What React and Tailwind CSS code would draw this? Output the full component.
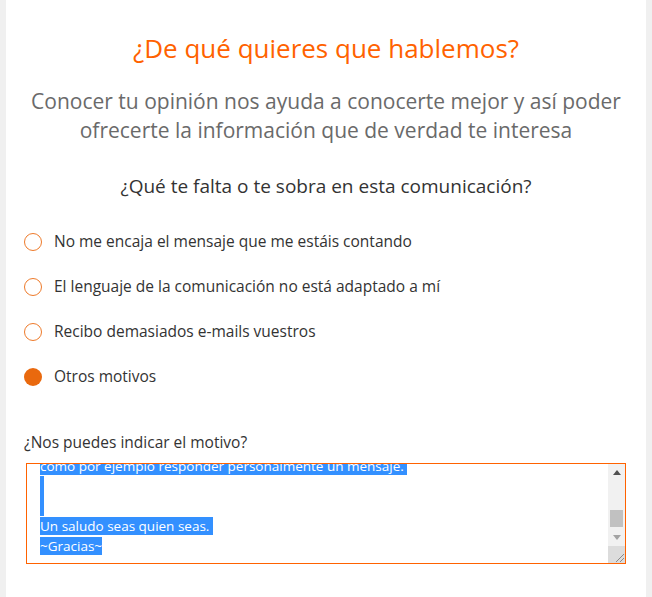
import React from "react";

const font = { fontFamily: "'Open Sans', Lato, sans-serif" };

const options = [
	{ label: "No me encaja el mensaje que me estáis contando", checked: false },
	{ label: "El lenguaje de la comunicación no está adaptado a mí", checked: false },
	{ label: "Recibo demasiados e-mails vuestros", checked: false },
	{ label: "Otros motivos", checked: true },
];

const Radio = ({ checked }) => (
	<span
		className={`w-[18px] h-[18px] rounded-full shrink-0 ${
			checked ? "bg-[#e9690e]" : "border-[1.5px] border-[#ee7a2a] bg-white"
		}`}
	/>
);

const Sel = ({ children }) => (
	<span className="bg-[#3390ff] text-white">{children}</span>
);

const FakeTextarea = () => (
	<div className="mx-[20px] h-[101px] border border-[#ff6200] bg-white flex overflow-hidden">
		{/* text area content, scrolled to bottom */}
		<div className="flex-1 overflow-hidden pl-[13px] text-[13.5px] leading-[20px] text-white">
			<div className="-mt-[8px]">
				<div className="h-[20px] whitespace-pre">
					<Sel>como por ejemplo responder personalmente un mensaje. </Sel>
				</div>
				<div className="h-[20px]">
					<span className="inline-block w-[4px] h-[20px] bg-[#3390ff] align-top" />
				</div>
				<div className="h-[20px]">
					<span className="inline-block w-[4px] h-[20px] bg-[#3390ff] align-top" />
				</div>
				<div className="h-[20px] whitespace-pre">
					<Sel>Un saludo seas quien seas. </Sel>
				</div>
				<div className="h-[20px] whitespace-pre">
					<Sel>~Gracias~</Sel>
				</div>
			</div>
		</div>
		{/* scrollbar */}
		<div className="w-[17px] flex flex-col bg-[#f1f1f1]">
			<div className="h-[17px] flex items-center justify-center">
				<svg width="8" height="5" viewBox="0 0 8 5">
					<path d="M4 0 L8 5 L0 5 Z" fill="#505050" />
				</svg>
			</div>
			<div className="flex-1 flex flex-col justify-end pb-[2px]">
				<div className="mx-[2px] h-[17px] bg-[#c1c1c1]" />
			</div>
			<div className="h-[17px] flex items-center justify-center">
				<svg width="8" height="5" viewBox="0 0 8 5">
					<path d="M0 0 L8 0 L4 5 Z" fill="#a3a3a3" />
				</svg>
			</div>
			<div className="h-[17px] bg-[#dcdcdc] flex items-end justify-end">
				<svg width="12" height="12" viewBox="0 0 12 12">
					<path d="M11 3 L3 11 M11 7 L7 11" stroke="#8a8a8a" strokeWidth="1" />
				</svg>
			</div>
		</div>
	</div>
);

export default function App() {
	return (
		<div className="min-h-screen bg-[#f0f0f0] px-[6px]" style={font}>
			<div className="bg-white min-h-screen pt-[30px] pb-[34px]">
				<h1 className="text-center text-[26px] leading-[36px] text-[#ff6200]">
					¿De qué quieres que hablemos?
				</h1>
				<p className="mt-[21px] text-center text-[21px] leading-[29px] text-[#6a6a6a]">
					Conocer tu opinión nos ayuda a conocerte mejor y así poder
					<br />
					ofrecerte la información que de verdad te interesa
				</p>
				<h2 className="mt-[28px] text-center text-[19px] leading-[26px] text-[#333333]">
					¿Qué te falta o te sobra en esta comunicación?
				</h2>
				<ul className="mt-[32px] flex flex-col gap-[23px] pl-[18px]">
					{options.map((o) => (
						<li key={o.label} className="flex items-center gap-[12px] h-[22px]">
							<Radio checked={o.checked} />
							<span className="text-[15.5px] text-[#333333]">{o.label}</span>
						</li>
					))}
				</ul>
				<div className="mt-[43px] pl-[18px] text-[15.5px] leading-[22px] text-[#333333]">
					¿Nos puedes indicar el motivo?
				</div>
				<div className="mt-[10px]">
					<FakeTextarea />
				</div>
			</div>
		</div>
	);
}
